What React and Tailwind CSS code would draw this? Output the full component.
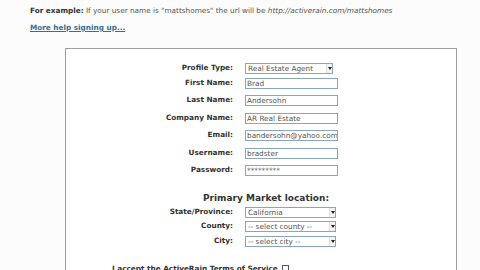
import React from 'react';

const Row = ({ label, children, className }) => (
    <div className={`flex items-center ${className || ''}`}>
        <label className="w-[80px] shrink-0 whitespace-nowrap text-right font-bold text-[#333]">{label}</label>
        <div className="ml-[12px]">{children}</div>
    </div>
);

const Input = ({ value }) => (
    <div className="h-[11px] w-[93px] overflow-hidden whitespace-nowrap border border-[#8aa6bf] bg-white px-[1px] leading-[9px] text-[#555]">{value}</div>
);

const Select = ({ value, w }) => (
    <div className={`flex h-[11px] ${w} items-stretch border border-[#8aa6bf] bg-white`}>
        <span className="flex-1 overflow-hidden whitespace-nowrap px-[2px] leading-[9px] text-[#555]">{value}</span>
        <span className="flex w-[6px] items-center justify-center border-l border-[#ddd] bg-[#f2f2f2]">
            <svg width="4" height="3" viewBox="0 0 4 3"><path d="M0 0h4L2 3z" fill="#222" /></svg>
        </span>
    </div>
);

export default function App() {
    return (
        <div className="h-[270px] w-[480px] overflow-hidden bg-[#fbfcfb] pl-[30px] pt-[5px] text-[7.3px] text-[#555]" style={{ fontFamily: '"DejaVu Sans", Verdana, sans-serif' }}>
            <p className="leading-[11px]">
                <span className="font-bold text-[#333]">For example:</span> If your user name is "mattshomes" the url will be <i>http://activerain.com/mattshomes</i>
            </p>
            <a href="#" className="mt-[6px] block w-fit font-bold leading-[11px] text-[#3a6d94] underline">More help signing up...</a>

            {/* signup box */}
            <div className="mt-[15px] ml-[35px] h-[240px] w-[392px] border border-[#9e9e9e] bg-white pt-[14px] pl-[87px]">
                <div className="flex flex-col">
                    <Row label="Profile Type:"><Select value="Real Estate Agent" w="w-[88px]" /></Row>
                    <Row label="First Name:" className="mt-[3.5px]"><Input value="Brad" /></Row>
                    <Row label="Last Name:" className="mt-[6.5px]"><Input value="Andersohn" /></Row>
                    <Row label="Company Name:" className="mt-[6.5px]"><Input value="AR Real Estate" /></Row>
                    <Row label="Email:" className="mt-[6.5px]"><Input value="bandersohn@yahoo.com" /></Row>
                    <Row label="Username:" className="mt-[6.5px]"><Input value="bradster" /></Row>
                    <Row label="Password:" className="mt-[6px]"><Input value="*********" /></Row>
                </div>

                <h3 className="mt-[16px] ml-[50px] text-[9px] font-bold leading-[12px] text-[#333]">Primary Market location:</h3>

                <div className="mt-[3px] flex flex-col gap-[3.7px]">
                    <Row label="State/Province:"><Select value="California" w="w-[91px]" /></Row>
                    <Row label="County:"><Select value="-- select county --" w="w-[91px]" /></Row>
                    <Row label="City:"><Select value="-- select city --" w="w-[91px]" /></Row>
                </div>

                <p className="-ml-[41px] mt-[16px] flex items-center gap-[4px] font-bold leading-[11px] text-[#333]">
                    I accept the ActiveRain Terms of Service <span className="inline-block h-[7px] w-[7px] border border-[#555] bg-white" />
                </p>
            </div>
        </div>
    );
}
